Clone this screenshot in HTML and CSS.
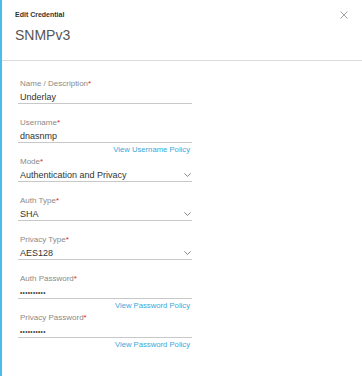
FILE: index.html
```html
<!DOCTYPE html>
<html>
<head>
    <title>Edit Credential</title>
    <link rel="stylesheet" href="styles.css">
</head>
<body>
    <div class="panel">
        <div class="header">
            <div class="titles">
                <div class="subtitle">Edit Credential</div>
                <h1>SNMPv3</h1>
            </div>
            <button class="close-btn" aria-label="Close">
                <svg width="8" height="8" viewBox="0 0 8 8"><path d="M0.5 0.5 L7.5 7.5 M7.5 0.5 L0.5 7.5" stroke="#9a9a9a" stroke-width="0.9" fill="none"/></svg>
            </button>
        </div>

        <div class="form">
            <div class="field">
                <label>Name / Description<span class="req">*</span></label>
                <div class="value">Underlay</div>
            </div>

            <div class="field">
                <label>Username<span class="req">*</span></label>
                <div class="value">dnasnmp</div>
            </div>
            <a class="policy" href="#">View Username Policy</a>

            <div class="field">
                <label>Mode<span class="req">*</span></label>
                <div class="value select">Authentication and Privacy
                    <svg class="chevron" width="7" height="4" viewBox="0 0 7 4"><path d="M0.4 0.4 L3.5 3.4 L6.6 0.4" stroke="#777" stroke-width="0.9" fill="none"/></svg>
                </div>
            </div>

            <div class="field">
                <label>Auth Type<span class="req">*</span></label>
                <div class="value select">SHA
                    <svg class="chevron" width="7" height="4" viewBox="0 0 7 4"><path d="M0.4 0.4 L3.5 3.4 L6.6 0.4" stroke="#777" stroke-width="0.9" fill="none"/></svg>
                </div>
            </div>

            <div class="field">
                <label>Privacy Type<span class="req">*</span></label>
                <div class="value select">AES128
                    <svg class="chevron" width="7" height="4" viewBox="0 0 7 4"><path d="M0.4 0.4 L3.5 3.4 L6.6 0.4" stroke="#777" stroke-width="0.9" fill="none"/></svg>
                </div>
            </div>

            <div class="field">
                <label>Auth Password<span class="req">*</span></label>
                <div class="value password">••••••••••</div>
            </div>
            <a class="policy" href="#">View Password Policy</a>

            <div class="field">
                <label>Privacy Password<span class="req">*</span></label>
                <div class="value password">••••••••••</div>
            </div>
            <a class="policy" href="#">View Password Policy</a>
        </div>
    </div>
</body>
</html>
```

FILE: styles.css
```css
body { margin: 0; font-family: "Liberation Sans", Arial, sans-serif; background: #fff; }
.panel {
    width: 360px;
    height: 376px;
    border-left: 2px solid #4bbde6;
}
.header {
    display: flex;
    justify-content: space-between;
    padding: 10px 14px 16px 13px;
    border-bottom: 1px solid #dcdcdc;
}
.subtitle {
    font-size: 7px;
    line-height: 9px;
    font-weight: bold;
    color: #333;
}
h1 {
    margin: 7px 0 0 0;
    font-size: 14px;
    line-height: 18px;
    font-weight: normal;
    color: #555;
}
.close-btn {
    align-self: flex-start;
    margin-top: 1px;
    padding: 0;
    border: none;
    background: none;
    width: 8px;
    height: 8px;
    line-height: 0;
}
.form {
    width: 174px;
    padding: 18px 0 0 16px;
}
.field { margin-bottom: 14px; }
label {
    display: block;
    padding-left: 2px;
    font-size: 8px;
    line-height: 10px;
    color: #8a8a8a;
}
.req { color: #e2231a; }
.value {
    display: flex;
    align-items: center;
    justify-content: space-between;
    margin-top: 2px;
    padding: 0 1px 0 2px;
    height: 12px;
    font-size: 9px;
    color: #333;
    border-bottom: 1px solid #c8c8c8;
}
.password { font-size: 6.5px; letter-spacing: 0.3px; color: #444; }
.policy {
    display: block;
    text-align: right;
    margin: -12px 2px 2px 0;
    font-size: 7.7px;
    line-height: 10px;
    color: #38a8dc;
    text-decoration: none;
}
```
